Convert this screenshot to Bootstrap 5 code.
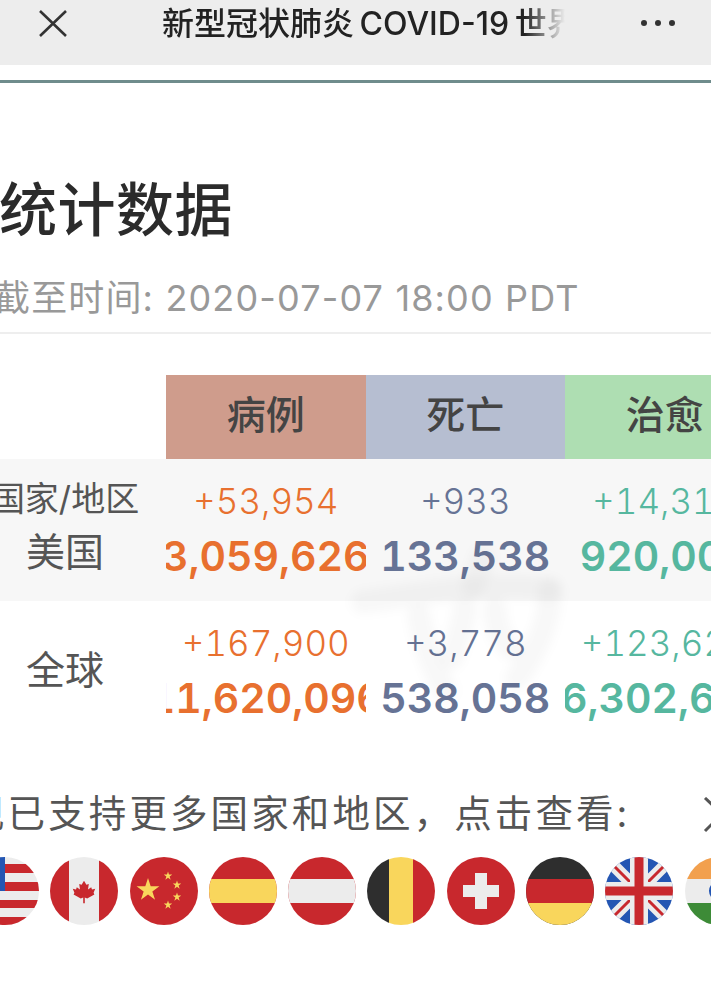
<!DOCTYPE html>
<html lang="zh-CN">
<head>
  <meta charset="UTF-8">
  <meta name="viewport" content="width=device-width, initial-scale=1.0">
  <title>新型冠状肺炎 COVID-19 世界</title>
  <link href="https://cdn.jsdelivr.net/npm/bootstrap@5.3.3/dist/css/bootstrap.min.css" rel="stylesheet">
  <style>
    html, body { height: 100%; overflow: hidden; }
    body {
      font-family: "Inter", "Noto Sans CJK SC", sans-serif;
      background-color: #fff;
      color: #555;
    }

    /* top bar */
    .wx-bar {
      height: 65px;
      background-color: #ededed;
      padding: 0 38px 19px;
    }
    .wx-title {
      width: 403px;
      margin: 2px 0 0 94px;
      font-size: 32px;
      line-height: 46px;
      font-weight: 500;
      word-spacing: -3px;
      color: #222;
      white-space: nowrap;
      overflow: hidden;
      -webkit-mask-image: linear-gradient(to right, #000 90%, transparent 100%);
      mask-image: linear-gradient(to right, #000 90%, transparent 100%);
    }
    .wx-more { gap: 8px; margin-left: auto; margin-right: -2px; }
    .wx-more i { width: 6px; height: 6px; border-radius: 50%; background: #333; display: block; }
    .teal-rule { height: 3px; margin-top: 15px; background-color: #6f8c8c; }

    /* heading */
    .stat-head { padding-top: 87px; height: 251px; border-bottom: 2px solid #eee; }
    .stat-title {
      font-size: 58px;
      line-height: 80px;
      font-weight: 500;
      color: #2b2b2b;
      letter-spacing: .5px;
      white-space: nowrap;
      margin: 0 0 0 -118px;
    }
    .stat-time {
      font-size: 36px;
      line-height: 44px;
      letter-spacing: 1.15px;
      color: #999;
      white-space: nowrap;
      margin: 26px 0 0 -6px;
    }

    /* table */
    .stat-table { margin-top: 41px; position: relative; width: 711px; overflow: hidden; }
    .stat-row { display: flex; width: 765px; }
    .c-name { width: 166px; flex: none; padding-right: 36px; font-size: 39px; color: #555; white-space: nowrap; }
    .c-num { width: 199.5px; flex: none; overflow: hidden; }
    .c-head {
      height: 84px;
      padding-bottom: 4px;
      font-size: 39px;
      font-weight: 500;
      color: #444;
    }
    .bg-case { background-color: #cf9c8c; }
    .bg-dead { background-color: #b6bed1; }
    .bg-cure { background-color: #aedeb2; }
    .stat-body { height: 142px; }
    .stat-body .c-num { padding-top: 22px; }
    .stat-body.shaded { background-color: #f7f7f7; }
    .c-name .hint { font-size: 34px; line-height: 40px; margin: 1px 0 4px 0; }
    .c-name.lift { padding-bottom: 4px; }
    .delta {
      font-size: 35px;
      line-height: 40px;
      font-weight: 300;
      font-variant-numeric: tabular-nums;
      white-space: nowrap;
    }
    .total {
      font-size: 41px;
      line-height: 50px;
      font-weight: 600;
      font-variant-numeric: tabular-nums;
      white-space: nowrap;
      margin-top: 10px;
    }
    .t-case { color: #e8702f; }
    .t-dead { color: #667395; }
    .t-cure { color: #56b79f; }
    .water-mark { position: absolute; left: 345px; top: 165px; pointer-events: none; filter: blur(5px); }

    /* flags */
    .more-line {
      font-size: 37.5px;
      line-height: 50px;
      letter-spacing: 3.1px;
      white-space: nowrap;
      color: #555;
      margin: 46px 0 0 -33px;
    }
    .more-arrow { position: absolute; left: 702px; top: 797px; }
    .flag-row { gap: 11.3px; margin: 18px 0 0 -29px; }
    .flag-row svg { flex: none; width: 68px; height: 68px; }
  </style>
</head>
<body>

<!-- Top bar -->
<div class="wx-bar d-flex align-items-center">
  <svg class="flex-shrink-0" width="30" height="30" viewBox="0 0 30 30"><path d="M2 3 L28 28 M28 3 L2 28" stroke="#333" stroke-width="2.6" fill="none"/></svg>
  <div class="wx-title">新型冠状肺炎 COVID-19 世界</div>
  <div class="wx-more d-flex"><i></i><i></i><i></i></div>
</div>
<div class="teal-rule"></div>

<!-- Heading -->
<div class="stat-head">
  <h1 class="stat-title">疫情统计数据</h1>
  <p class="stat-time">截至时间: 2020-07-07 18:00 PDT</p>
</div>

<!-- Table -->
<div class="stat-table">
  <div class="stat-row">
    <div class="c-name"></div>
    <div class="c-num c-head bg-case d-flex align-items-center justify-content-center">病例</div>
    <div class="c-num c-head bg-dead d-flex align-items-center justify-content-center">死亡</div>
    <div class="c-num c-head bg-cure d-flex align-items-center justify-content-center">治愈</div>
  </div>
  <div class="stat-row stat-body shaded">
    <div class="c-name d-flex flex-column justify-content-center align-items-center">
      <div class="hint">国家/地区</div>
      <div>美国</div>
    </div>
    <div class="c-num d-flex flex-column align-items-center">
      <div class="delta t-case">+53,954</div><div class="total t-case">3,059,626</div>
    </div>
    <div class="c-num d-flex flex-column align-items-center">
      <div class="delta t-dead">+933</div><div class="total t-dead">133,538</div>
    </div>
    <div class="c-num d-flex flex-column align-items-center">
      <div class="delta t-cure">+14,319</div><div class="total t-cure">920,000</div>
    </div>
  </div>
  <div class="stat-row stat-body">
    <div class="c-name lift d-flex align-items-center justify-content-center">全球</div>
    <div class="c-num d-flex flex-column align-items-center">
      <div class="delta t-case">+167,900</div><div class="total t-case">11,620,096</div>
    </div>
    <div class="c-num d-flex flex-column align-items-center">
      <div class="delta t-dead">+3,778</div><div class="total t-dead">538,058</div>
    </div>
    <div class="c-num d-flex flex-column align-items-center">
      <div class="delta t-cure">+123,621</div><div class="total t-cure">6,302,671</div>
    </div>
  </div>
  <!-- faint brush mark behind the numbers -->
  <svg class="water-mark" width="230" height="200" viewBox="0 0 230 200" fill="none" stroke="#000" stroke-opacity=".028" stroke-width="24" stroke-linecap="round">
    <path d="M18 62 C70 55 150 40 205 50"/>
    <path d="M205 50 C205 80 192 110 172 138"/>
    <path d="M74 76 C78 100 86 125 100 150"/>
    <path d="M138 18 L128 46"/>
    <path d="M120 70 C116 90 112 105 106 118 M150 70 C152 90 156 100 166 108"/>
  </svg>
</div>

<!-- Flags -->
<div class="more-line">现已支持更多国家和地区，点击查看:</div>
<svg class="more-arrow" width="9" height="36" viewBox="0 0 9 36"><path d="M3 1 L20 17 L3 34" stroke="#555" stroke-width="3" fill="none"/></svg>

<div class="flag-row d-flex">
  <!-- US -->
  <svg viewBox="0 0 68 68" class="rounded-circle">
    <rect width="68" height="68" fill="#ececec"/>
    <g fill="#c8282d"><rect y="7" width="68" height="9"/><rect y="25" width="68" height="9"/><rect y="43" width="68" height="8"/><rect y="60" width="68" height="8"/></g>
    <rect width="34" height="34" fill="#2456b3"/>
  </svg>
  <!-- Canada -->
  <svg viewBox="0 0 68 68" class="rounded-circle">
    <rect width="68" height="68" fill="#ececec"/>
    <rect width="19" height="68" fill="#c8282d"/><rect x="49" width="19" height="68" fill="#c8282d"/>
    <path transform="translate(34 35) scale(.8) translate(-34 -38)" d="M34 24 L37 29 L40 28 L39 35 L43 32 L44 35 L48 34 L46 39 L47 41 L38 46 L35 45 L35 52 L33 52 L33 45 L30 46 L21 41 L22 39 L20 34 L24 35 L25 32 L29 35 L28 28 L31 29Z" fill="#c8282d"/>
  </svg>
  <!-- China -->
  <svg viewBox="0 0 68 68" class="rounded-circle">
    <rect width="68" height="68" fill="#c8282d"/>
    <g fill="#f9d65c">
      <path transform="translate(18 33) scale(12)" d="M0 -1 L.225 -.309 L.951 -.309 L.363 .118 L.588 .809 L0 .382 L-.588 .809 L-.363 .118 L-.951 -.309 L-.225 -.309Z"/>
      <path transform="translate(38 19) scale(4.500)" d="M0 -1 L.225 -.309 L.951 -.309 L.363 .118 L.588 .809 L0 .382 L-.588 .809 L-.363 .118 L-.951 -.309 L-.225 -.309Z"/>
      <path transform="translate(47 28) scale(4.500)" d="M0 -1 L.225 -.309 L.951 -.309 L.363 .118 L.588 .809 L0 .382 L-.588 .809 L-.363 .118 L-.951 -.309 L-.225 -.309Z"/>
      <path transform="translate(47 40) scale(4.500)" d="M0 -1 L.225 -.309 L.951 -.309 L.363 .118 L.588 .809 L0 .382 L-.588 .809 L-.363 .118 L-.951 -.309 L-.225 -.309Z"/>
      <path transform="translate(38 48) scale(4.500)" d="M0 -1 L.225 -.309 L.951 -.309 L.363 .118 L.588 .809 L0 .382 L-.588 .809 L-.363 .118 L-.951 -.309 L-.225 -.309Z"/>
    </g>
  </svg>
  <!-- Spain -->
  <svg viewBox="0 0 68 68" class="rounded-circle">
    <rect width="68" height="68" fill="#c8282d"/><rect y="22" width="68" height="24" fill="#f9d65c"/>
  </svg>
  <!-- Austria -->
  <svg viewBox="0 0 68 68" class="rounded-circle">
    <rect width="68" height="68" fill="#c8282d"/><rect y="22" width="68" height="24" fill="#ececec"/>
  </svg>
  <!-- Belgium -->
  <svg viewBox="0 0 68 68" class="rounded-circle">
    <rect width="22" height="68" fill="#2e2e2e"/><rect x="22" width="24" height="68" fill="#f9d65c"/><rect x="46" width="22" height="68" fill="#c8282d"/>
  </svg>
  <!-- Switzerland -->
  <svg viewBox="0 0 68 68" class="rounded-circle">
    <rect width="68" height="68" fill="#c8282d"/>
    <path d="M28 16 H40 V28 H52 V40 H40 V52 H28 V40 H16 V28 H28Z" fill="#ececec"/>
  </svg>
  <!-- Germany -->
  <svg viewBox="0 0 68 68" class="rounded-circle">
    <rect width="68" height="68" fill="#2e2e2e"/><rect y="22" width="68" height="24" fill="#c8282d"/><rect y="46" width="68" height="22" fill="#f9d65c"/>
  </svg>
  <!-- UK -->
  <svg viewBox="0 0 68 68" class="rounded-circle">
    <rect width="68" height="68" fill="#2456b3"/>
    <path d="M0 0 L68 68 M68 0 L0 68" stroke="#ececec" stroke-width="12"/>
    <path d="M8 8 L28 28 M60 8 L40 28 M8 60 L28 40 M60 60 L40 40" stroke="#c8282d" stroke-width="3"/>
    <path d="M34 0 V68 M0 34 H68" stroke="#ececec" stroke-width="18"/>
    <path d="M34 0 V68 M0 34 H68" stroke="#c8282d" stroke-width="9"/>
  </svg>
  <!-- India -->
  <svg viewBox="0 0 68 68" class="rounded-circle">
    <rect width="68" height="68" fill="#ececec"/><rect width="68" height="22" fill="#f2a04e"/><rect y="46" width="68" height="22" fill="#3d8b37"/>
    <circle cx="34" cy="34" r="9" fill="none" stroke="#2456b3" stroke-width="2"/>
  </svg>
</div>

<script src="https://cdn.jsdelivr.net/npm/bootstrap@5.3.3/dist/js/bootstrap.bundle.min.js"></script>
</body>
</html>
